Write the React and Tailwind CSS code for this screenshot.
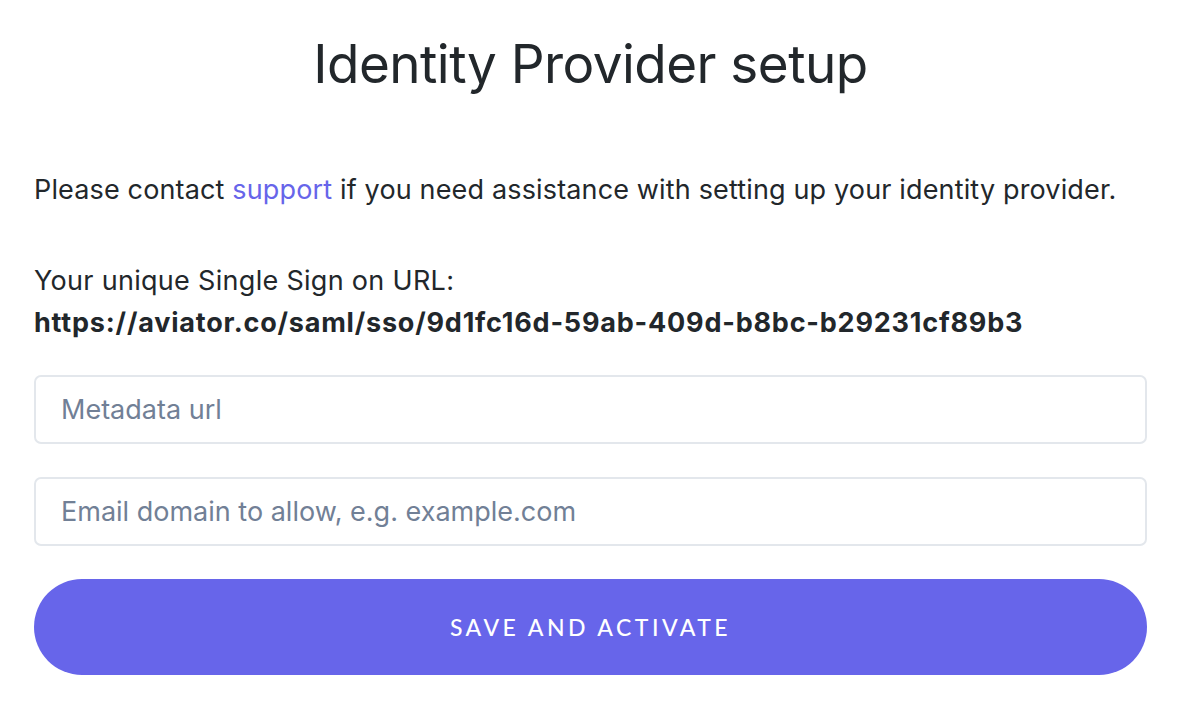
export default function App() {
  return (
    <div className="w-[1188px] h-[712px] bg-white" style={{ fontFamily: 'Inter, "Noto Sans", sans-serif' }}>
      <div className="ml-[34px] w-[1113px] pt-[28px] flex flex-col">
        <h1 className="text-center text-[53px] leading-[72px] text-[#22272b] font-normal tracking-[-0.01em]">
          Identity Provider setup
        </h1>
        <p className="mt-[72px] text-[27px] leading-[36px] tracking-[0.15px] text-[#22272b]">
          Please contact <a className="text-[#6765ea]">support</a> if you need assistance with setting up your identity provider.
        </p>
        <div className="mt-[52px] text-[27px] leading-[42px] tracking-[0.3px] text-[#22272b]">
          <div>Your unique Single Sign on URL:</div>
          <div className="font-bold tracking-[0.8px]">https://aviator.co/saml/sso/9d1fc16d-59ab-409d-b8bc-b29231cf89b3</div>
        </div>
        <input
          placeholder="Metadata url"
          className="mt-[31px] h-[69px] w-full rounded-[7px] border-2 border-[#e3e7ec] px-[25px] text-[27px] text-[#22272b] placeholder:text-[#718096] outline-none"
        />
        <input
          placeholder="Email domain to allow, e.g. example.com"
          className="mt-[33px] h-[69px] w-full rounded-[7px] border-2 border-[#e3e7ec] px-[25px] text-[27px] text-[#22272b] placeholder:text-[#718096] outline-none"
        />
        <button
          className="mt-[33px] h-[96px] w-full rounded-full bg-[#6765ea] text-white text-[23px] uppercase tracking-[0.15em] font-medium"
          style={{ fontFamily: 'Lato, "Noto Sans", sans-serif' }}
        >
          Save and Activate
        </button>
      </div>
    </div>
  );
}
